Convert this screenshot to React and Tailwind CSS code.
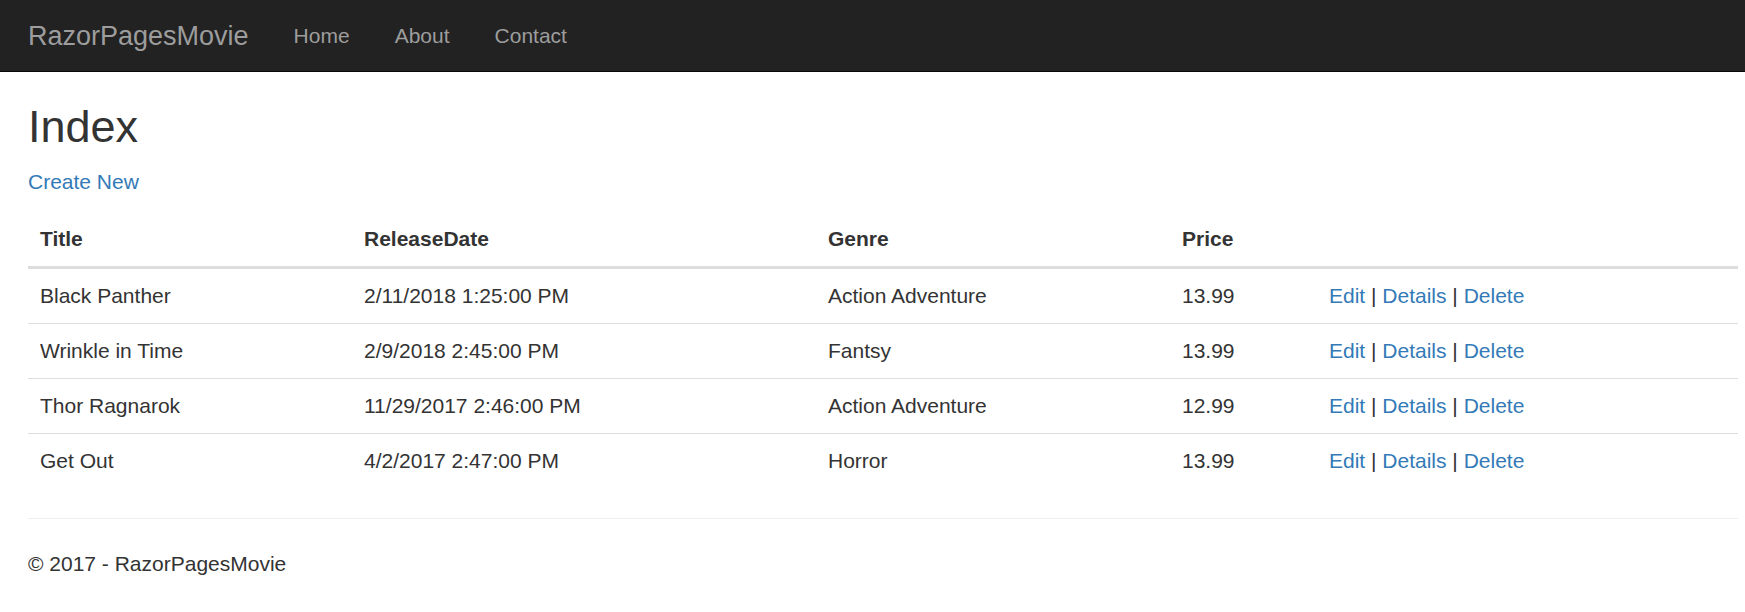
import React from "react";

const movies = [
  { title: "Black Panther", date: "2/11/2018 1:25:00 PM", genre: "Action Adventure", price: "13.99" },
  { title: "Wrinkle in Time", date: "2/9/2018 2:45:00 PM", genre: "Fantsy", price: "13.99" },
  { title: "Thor Ragnarok", date: "11/29/2017 2:46:00 PM", genre: "Action Adventure", price: "12.99" },
  { title: "Get Out", date: "4/2/2017 2:47:00 PM", genre: "Horror", price: "13.99" },
];

export default function App() {
  return (
    <div className="min-h-screen bg-white font-['Liberation_Sans',Arial,sans-serif] text-[21px] leading-[30px] text-[#333]">
      <nav className="flex h-[72px] items-center border-b-[1.5px] border-[#080808] bg-[#222]">
        <a className="pl-[28px] pr-[22.5px] text-[27px] leading-[30px] text-[#9d9d9d]">RazorPagesMovie</a>
        <a className="px-[22.5px] text-[#9d9d9d]">Home</a>
        <a className="px-[22.5px] text-[#9d9d9d]">About</a>
        <a className="px-[22.5px] text-[#9d9d9d]">Contact</a>
      </nav>
      <main className="ml-[28px] w-[1710px]">
        <h2 className="mt-[30px] mb-[15px] text-[45px] leading-[49.5px]">Index</h2>
        <p className="mb-[15px]">
          <a className="text-[#337ab7]">Create New</a>
        </p>
        <table className="w-full table-fixed border-collapse">
          <thead>
            <tr>
              <th className="w-[324px] border-b-[3px] border-[#ddd] p-[12px] text-left font-bold">Title</th>
              <th className="w-[464px] border-b-[3px] border-[#ddd] p-[12px] text-left font-bold">ReleaseDate</th>
              <th className="w-[354px] border-b-[3px] border-[#ddd] p-[12px] text-left font-bold">Genre</th>
              <th className="w-[147px] border-b-[3px] border-[#ddd] p-[12px] text-left font-bold">Price</th>
              <th className="border-b-[3px] border-[#ddd] p-[12px] text-left font-bold"></th>
            </tr>
          </thead>
          <tbody>
            {movies.map((m, i) => (
              <tr key={m.title}>
                <td className={(i === 0 ? "" : "border-t-[1.5px] ") + "border-[#ddd] p-[12px]"}>{m.title}</td>
                <td className={(i === 0 ? "" : "border-t-[1.5px] ") + "border-[#ddd] p-[12px]"}>{m.date}</td>
                <td className={(i === 0 ? "" : "border-t-[1.5px] ") + "border-[#ddd] p-[12px]"}>{m.genre}</td>
                <td className={(i === 0 ? "" : "border-t-[1.5px] ") + "border-[#ddd] p-[12px]"}>{m.price}</td>
                <td className={(i === 0 ? "" : "border-t-[1.5px] ") + "border-[#ddd] p-[12px]"}>
                  <a className="text-[#337ab7]">Edit</a> | <a className="text-[#337ab7]">Details</a> |{" "}
                  <a className="text-[#337ab7]">Delete</a>
                </td>
              </tr>
            ))}
          </tbody>
        </table>
        <hr className="mt-[30px] mb-[30px] border-t-[1.5px] border-[#eee]" />
        <footer>
          <p>© 2017 - RazorPagesMovie</p>
        </footer>
      </main>
    </div>
  );
}
